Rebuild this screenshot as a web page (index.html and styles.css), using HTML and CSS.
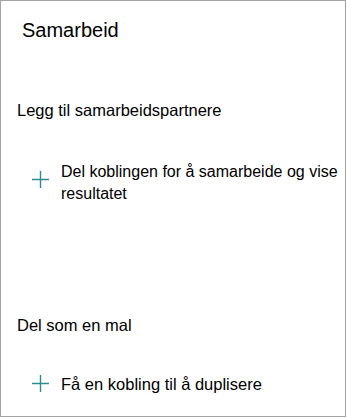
FILE: index.html
```html
<!DOCTYPE html>
<html lang="nb">
<head>
<meta charset="utf-8">
<link rel="stylesheet" href="styles.css">
</head>
<body>
<div class="panel">
  <h1 class="title">Samarbeid</h1>
  <section class="section first">
    <h2 class="heading">Legg til samarbeidspartnere</h2>
    <div class="action">
      <svg class="plus" width="17" height="17" viewBox="0 0 17 17"><path d="M8.5 0V17M0 8.5H17" stroke="#2e8b8b" stroke-width="1.4" fill="none"/></svg>
      <span class="label">Del koblingen for å samarbeide og vise resultatet</span>
    </div>
  </section>
  <section class="section second">
    <h2 class="heading">Del som en mal</h2>
    <div class="action">
      <svg class="plus" width="17" height="17" viewBox="0 0 17 17"><path d="M8.5 0V17M0 8.5H17" stroke="#2e8b8b" stroke-width="1.4" fill="none"/></svg>
      <span class="label">Få en kobling til å duplisere</span>
    </div>
  </section>
</div>
</body>
</html>
```
FILE: styles.css
```css
html, body {
  margin: 0;
  padding: 0;
  background: #ffffff;
}
body {
  font-family: "Liberation Sans", Arial, sans-serif;
  color: #000000;
}
.panel {
  box-sizing: border-box;
  width: 346px;
  height: 417px;
  border: 1px solid #a3a3a3;
  padding: 17px 0 0 16px;
}
.title {
  margin: 0 0 0 5px;
  font-size: 20px;
  font-weight: normal;
  line-height: 24px;
}
.heading {
  margin: 0;
  font-size: 16.5px;
  font-weight: normal;
  line-height: 20px;
}
.section.first {
  margin-top: 58px;
}
.section.second {
  margin-top: 110px;
}
.action {
  display: flex;
  align-items: flex-start;
  margin-left: 15px;
}
.first .action {
  margin-top: 41px;
}
.second .action {
  margin-top: 38px;
}
.plus {
  flex: none;
  margin-right: 12px;
}
.first .plus {
  margin-top: 10px;
}
.second .plus {
  margin-top: 2px;
}
.label {
  flex: 1;
  font-size: 16px;
  line-height: 22px;
}
.second .label {
  font-size: 16.5px;
}
```
